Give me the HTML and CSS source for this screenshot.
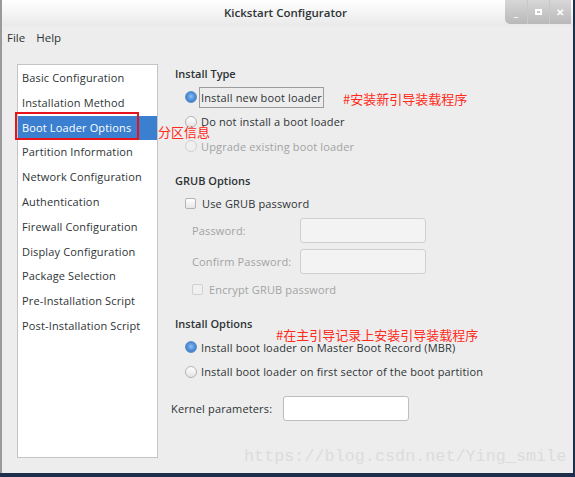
FILE: index.html
```html
<!DOCTYPE html>
<html lang="en">
<head>
  <meta charset="UTF-8" />
  <title>Kickstart Configurator</title>
  <link rel="stylesheet" href="styles.css">
</head>
<body>
  <div class="window">
    <div class="titlebar">
      <span class="title">Kickstart Configurator</span>
      <div class="controls">
        <span class="ctl">_</span>
        <span class="ctl"><i class="max"></i></span>
        <span class="ctl">&#x2715;</span>
      </div>
    </div>

    <div class="menubar">
      <span>File</span>
      <span>Help</span>
    </div>

    <div class="main">
      <ul class="sidebar">
        <li>Basic Configuration</li>
        <li>Installation Method</li>
        <li class="selected">Boot Loader Options</li>
        <li>Partition Information</li>
        <li>Network Configuration</li>
        <li>Authentication</li>
        <li>Firewall Configuration</li>
        <li>Display Configuration</li>
        <li>Package Selection</li>
        <li>Pre-Installation Script</li>
        <li>Post-Installation Script</li>
      </ul>

      <div class="content">
        <h3>Install Type</h3>
        <div class="option"><span class="radio checked"></span><span class="focus">Install new boot loader</span></div>
        <div class="option"><span class="radio"></span><span>Do not install a boot loader</span></div>
        <div class="option disabled"><span class="radio"></span><span>Upgrade existing boot loader</span></div>

        <h3 class="grub-title">GRUB Options</h3>
        <div class="option"><span class="check"></span><span>Use GRUB password</span></div>
        <div class="field disabled"><label>Password:</label><span class="entry"></span></div>
        <div class="field disabled"><label>Confirm Password:</label><span class="entry"></span></div>
        <div class="option sub disabled"><span class="check"></span><span>Encrypt GRUB password</span></div>

        <h3 class="opt-title">Install Options</h3>
        <div class="option"><span class="radio checked"></span><span>Install boot loader on Master Boot Record (MBR)</span></div>
        <div class="option"><span class="radio"></span><span>Install boot loader on first sector of the boot partition</span></div>

        <div class="kernel"><label>Kernel parameters:</label><span class="entry enabled"></span></div>
      </div>
    </div>

    <!-- red annotations drawn over the screenshot -->
    <div class="mark-box"></div>
    <span class="note note-part">分区信息</span>
    <span class="note note-new">#安装新引导装载程序</span>
    <span class="note note-mbr">#在主引导记录上安装引导装载程序</span>
    <span class="watermark">https://blog.csdn.net/Ying_smile</span>
  </div>
</body>
</html>
```

FILE: styles.css
```css
* {
  margin: 0;
  padding: 0;
  box-sizing: border-box;
}

body {
  width: 575px;
  height: 477px;
  overflow: hidden;
  background: #1d2f4a;
  font-family: 'Open Sans', 'Noto Sans', sans-serif;
  font-size: 11px;
  letter-spacing: 0.15px;
  color: #2e3436;
}

.window {
  position: relative;
  width: 573px;
  height: 473px;
  background: #ededed;
  border-left: 2px solid #9a9a9a;
  display: flex;
  flex-direction: column;
}

.titlebar {
  height: 26px;
  background: linear-gradient(#ffffff, #e9e9e9);
  position: relative;
  display: flex;
  align-items: center;
  justify-content: center;
}

.title {
  font-weight: 600;
  font-size: 11.5px;
  letter-spacing: 0;
  color: #2e3436;
  margin: -2px 0 0 -4px;
}

.controls {
  position: absolute;
  top: 0;
  right: 2px;
  height: 24px;
  display: flex;
  background: linear-gradient(#d7d7d7, #b9b9b9);
  border-bottom-left-radius: 5px;
}

.ctl {
  width: 22px;
  display: flex;
  align-items: center;
  justify-content: center;
  color: #fff;
  font-size: 10px;
  font-weight: bold;
  border-left: 1px solid #c9c9c9;
}

.ctl:first-child {
  border-left: none;
}

.max {
  width: 7px;
  height: 6px;
  border: 2px solid #fff;
}

.menubar {
  height: 26px;
  display: flex;
  gap: 11px;
  align-items: center;
  padding: 0 0 4px 5px;
  font-size: 11.5px;
  letter-spacing: 0;
}

.main {
  display: flex;
  padding: 12px 0 0 15px;
}

.sidebar {
  list-style: none;
  width: 141px;
  height: 394px;
  background: #fff;
  border: 1px solid #c4c4c4;
  padding-top: 1px;
}

.sidebar li {
  height: 24.8px;
  line-height: 24.8px;
  padding-left: 4px;
  white-space: nowrap;
}

.sidebar li.selected {
  background: #3a7fd0;
  color: #fff;
}

.content {
  padding: 2px 0 0 15px;
}

h3 {
  font-size: 11px;
  font-weight: 600;
  letter-spacing: 0;
  height: 16px;
  line-height: 16px;
  margin-left: 2px;
}

.option {
  display: flex;
  align-items: center;
  height: 24.6px;
  padding-left: 12px;
}

.option:first-of-type {
  margin-top: 3px;
}

.radio {
  width: 12px;
  height: 12px;
  border-radius: 50%;
  border: 1px solid #b3b3b3;
  background: linear-gradient(#ffffff, #e3e3e3);
  margin-right: 4px;
  flex-shrink: 0;
}

.radio.checked {
  border-color: #5d8fc7;
  background: radial-gradient(circle at 50% 45%, #8ec0f5 0, #4a8ad6 55%, #3a72b8 100%);
}

.check {
  width: 11px;
  height: 11px;
  border: 1px solid #b3b3b3;
  border-radius: 2px;
  background: linear-gradient(#ffffff, #e6e6e6);
  margin-right: 6px;
  flex-shrink: 0;
}

.focus {
  border: 1px solid #9c9c9c;
  padding: 2px 1px;
  margin-left: -2px;
}

.disabled {
  color: #a3a3a3;
}

.disabled .radio,
.disabled .check {
  border-color: #d0d0d0;
  background: #f0f0f0;
}

.grub-title {
  margin-top: 14px;
}

.grub-title + .option {
  margin-top: 2px;
}

.field {
  display: flex;
  align-items: center;
  height: 31px;
  padding-left: 19px;
}

.field label {
  width: 108px;
}

.entry {
  width: 126px;
  height: 25px;
  border: 1px solid #cfcfcf;
  border-radius: 3px;
  background: #f3f3f3;
}

.entry.enabled {
  background: #fff;
  border-color: #bdbdbd;
}

.option.sub {
  padding-left: 19px;
}

.opt-title {
  margin-top: 14px;
}

.opt-title + .option {
  margin-top: 3px;
}

.kernel {
  display: flex;
  align-items: center;
  margin-top: 12px;
  margin-left: -2px;
}

.kernel label {
  width: 112px;
}

.mark-box {
  position: absolute;
  left: 13px;
  top: 112px;
  width: 124px;
  height: 28px;
  border: 2px solid #e8141c;
}

.note {
  position: absolute;
  color: #ff2a1a;
  font-family: 'Noto Sans CJK SC', sans-serif;
  font-size: 13px;
  line-height: 14px;
  letter-spacing: 0;
}

.note-part {
  left: 156px;
  top: 125px;
}

.note-new {
  left: 341px;
  top: 92px;
}

.note-mbr {
  left: 274px;
  top: 328px;
}

.watermark {
  position: absolute;
  left: 242px;
  top: 447px;
  font-family: 'Liberation Mono', monospace;
  font-size: 16.8px;
  color: #dcdcdc;
  letter-spacing: 0;
}
```
